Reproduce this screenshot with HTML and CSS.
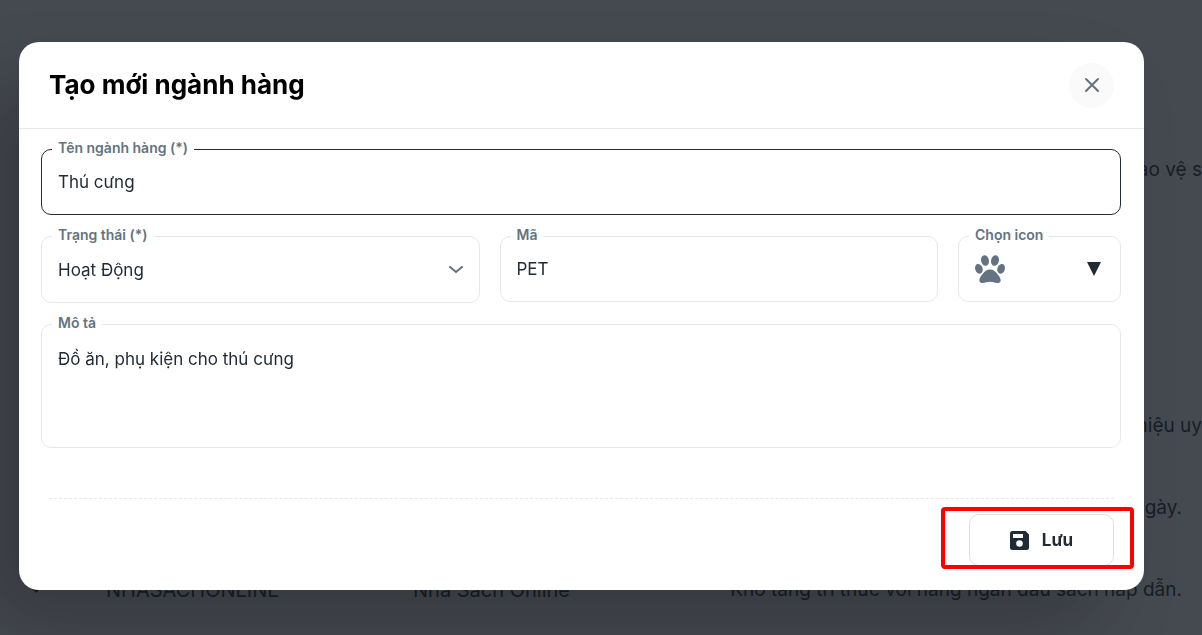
FILE: index.html
```html
<!DOCTYPE html>
<html lang="vi">
<head>
  <meta charset="UTF-8" />
  <meta name="viewport" content="width=device-width,initial-scale=1.0" />
  <title>Tạo mới ngành hàng</title>
  <link rel="stylesheet" href="styles.css">
</head>
<body>
  <main class="page">
    <table class="category-table">
      <tbody>
        <tr class="row-first"><td class="toggle"></td><td></td><td></td><td class="desc cut">bảo vệ s</td></tr>
        <tr class="row-tall"><td class="toggle"></td><td></td><td></td><td class="desc"></td></tr>
        <tr class="row-double"><td class="toggle"></td><td></td><td></td><td class="desc cut">hiệu uy</td></tr>
        <tr><td class="toggle"></td><td></td><td></td><td class="desc">ngày.</td></tr>
        <tr>
          <td class="toggle"><svg width="16" height="16" viewBox="0 0 16 16"><path d="M2 4l6 6 6-6" fill="none" stroke="currentColor" stroke-width="3"/></svg></td>
          <td>NHASACHONLINE</td>
          <td>Nhà Sách Online</td>
          <td class="desc">Kho tàng tri thức với hàng ngàn đầu sách hấp dẫn.</td>
        </tr>
      </tbody>
    </table>
  </main>

  <div class="backdrop">
    <form class="modal" role="dialog" aria-labelledby="modal-title">
      <header class="modal-header">
        <h1 id="modal-title">Tạo mới ngành hàng</h1>
        <button type="button" class="close-btn" aria-label="Đóng">
          <svg width="16" height="16" viewBox="0 0 16 16"><path d="M2 2l12 12M14 2L2 14" fill="none" stroke="currentColor" stroke-width="2" stroke-linecap="round"/></svg>
        </button>
      </header>

      <div class="modal-body">
        <div class="field focused">
          <label for="name">Tên ngành hàng (*)</label>
          <input type="text" id="name" value="Thú cưng">
        </div>

        <div class="field-row">
          <div class="field field-select">
            <label for="status">Trạng thái (*)</label>
            <select id="status">
              <option>Hoạt Động</option>
            </select>
            <svg class="chevron" width="14" height="8" viewBox="0 0 14 8"><path d="M1 1l6 5 6-5" fill="none" stroke="currentColor" stroke-width="2" stroke-linecap="round" stroke-linejoin="round"/></svg>
          </div>
          <div class="field">
            <label for="code">Mã</label>
            <input type="text" id="code" value="PET">
          </div>
          <div class="field">
            <label for="icon">Chọn icon</label>
            <button type="button" id="icon" class="icon-picker">
              <svg class="paw" width="30" height="28" viewBox="0 0 30 28" fill="currentColor">
                <ellipse cx="10" cy="5.5" rx="3.9" ry="5.4" transform="rotate(-12 10 5.5)"/>
                <ellipse cx="20" cy="5.5" rx="3.9" ry="5.4" transform="rotate(12 20 5.5)"/>
                <ellipse cx="3.9" cy="13.8" rx="3.7" ry="5" transform="rotate(-18 3.9 13.8)"/>
                <ellipse cx="26.1" cy="13.8" rx="3.7" ry="5" transform="rotate(18 26.1 13.8)"/>
                <path d="M15 14.5c3.200 0 5.300 1.800 7.200 4.200 1.800 2.300 3.500 4.400 3.500 6.500 0 1.900-1.400 2.800-3.300 2.800-2.600 0-4.800-1.200-7.400-1.200S10.200 28 7.600 28c-1.900 0-3.300-.9-3.300-2.800 0-2.100 1.700-4.200 3.500-6.500 1.900-2.400 4-4.200 7.200-4.200z"/>
              </svg>
              <svg width="14" height="14" viewBox="0 0 14 14"><path d="M0 0h14L7 14z" fill="#212b36"/></svg>
            </button>
          </div>
        </div>

        <div class="field">
          <label for="description">Mô tả</label>
          <textarea id="description">Đồ ăn, phụ kiện cho thú cưng</textarea>
        </div>
      </div>

      <footer class="modal-footer">
        <div class="save-wrap">
          <button type="submit" class="save-btn">
            <svg width="19" height="19" viewBox="0 0 19 19"><path fill="currentColor" fill-rule="evenodd" d="M2.500 0H15.500L19 3.500V16.500a2.500 2.500 0 0 1-2.500 2.500h-14A2.500 2.500 0 0 1 0 16.500v-14A2.500 2.500 0 0 1 2.500 0zM3 3v4h10V3zM9.500 9.200a3.300 3.300 0 1 0 0 6.600 3.300 3.300 0 0 0 0-6.600z"/></svg>
            Lưu
          </button>
          <div class="highlight"></div>
        </div>
      </footer>
    </form>
  </div>
</body>
</html>
```

FILE: styles.css
```css
* {
  box-sizing: border-box;
}

body {
  margin: 0;
  font-family: Inter, "Liberation Sans", sans-serif;
  color: #212b36;
  background: #fff;
}

/* page behind the dialog */
.page {
  height: 100vh;
  overflow: hidden;
  padding-top: 135px;
}

.category-table {
  width: 100%;
  border-collapse: collapse;
  table-layout: fixed;
  font-size: 20px;
  line-height: 24px;
}

.category-table tr {
  height: 82px;
  border-bottom: 1px dashed #f4f6f8;
}

.category-table .row-first {
  height: 67px;
}

.category-table .row-tall {
  height: 117px;
}

.category-table .row-double {
  height: 139px;
}

.category-table td {
  padding: 0 0 20px;
  vertical-align: bottom;
  white-space: nowrap;
}

.category-table .toggle {
  width: 106px;
  padding-left: 28px;
}

.category-table .desc {
  width: 482px;
  padding-right: 20px;
  font-size: 19px;
  text-align: right;
}

.category-table .cut {
  padding-right: 0;
}

/* dialog */
.backdrop {
  position: fixed;
  inset: 0;
  padding: 42px 58px 0 19px;
  background: rgba(22, 28, 36, 0.8);
}

.modal {
  background: #fff;
  border-radius: 20px;
  box-shadow: -40px 40px 80px -8px rgba(0, 0, 0, 0.24);
}

.modal-header {
  display: flex;
  justify-content: space-between;
  align-items: center;
  height: 87px;
  padding: 0 30px;
  border-bottom: 1px solid #e9eaec;
}

.modal-header h1 {
  margin: 0;
  font-size: 26px;
  line-height: 32px;
  font-weight: 700;
  color: #000;
}

.close-btn {
  display: flex;
  align-items: center;
  justify-content: center;
  width: 45px;
  height: 45px;
  padding: 0;
  border: 0;
  border-radius: 50%;
  background: #fafafa;
  color: #637381;
}

.modal-body {
  display: flex;
  flex-direction: column;
  gap: 21px;
  padding: 20px 23px 50px 22px;
}

.field-row {
  display: grid;
  grid-template-columns: 1fr 1fr 163px;
  gap: 20px;
  align-items: start;
}

.field {
  position: relative;
  display: flex;
}

.field label {
  position: absolute;
  top: -11px;
  left: 11px;
  padding: 0 6px;
  background: #fff;
  color: #637381;
  font-size: 14px;
  line-height: 20px;
  font-weight: 600;
}

.field input,
.field select,
.field textarea,
.icon-picker {
  width: 100%;
  height: 66px;
  padding: 0 16px;
  border: 1px solid #e5e8eb;
  border-radius: 10px;
  background: #fff;
  color: #212b36;
  font-family: inherit;
  font-size: 17px;
  outline: none;
}

.focused input {
  border-color: #212b36;
}

.field select {
  height: 67px;
  appearance: none;
}

.field textarea {
  height: 124px;
  padding-top: 22px;
  line-height: 24px;
  resize: none;
}

.chevron {
  position: absolute;
  top: 30px;
  right: 17px;
  color: #637381;
  pointer-events: none;
}

.icon-picker {
  display: flex;
  align-items: center;
  justify-content: space-between;
  padding-right: 19px;
}

.paw {
  color: #637381;
}

.modal-footer {
  display: flex;
  justify-content: flex-end;
  margin: 0 30px;
  padding: 15px 0 24px;
  border-top: 1px dashed #e5e8eb;
}

.save-wrap {
  position: relative;
}

.save-btn {
  display: flex;
  align-items: center;
  justify-content: center;
  gap: 13px;
  width: 145px;
  height: 52px;
  border: 1px solid #dcdfe4;
  border-radius: 10px;
  background: #fff;
  color: #212b36;
  font-family: inherit;
  font-size: 17px;
  font-weight: 700;
}

/* red frame around the save button */
.highlight {
  position: absolute;
  inset: -7px -20px -3px -28px;
  border: 4px solid #f00;
  border-radius: 4px;
  pointer-events: none;
}
```
